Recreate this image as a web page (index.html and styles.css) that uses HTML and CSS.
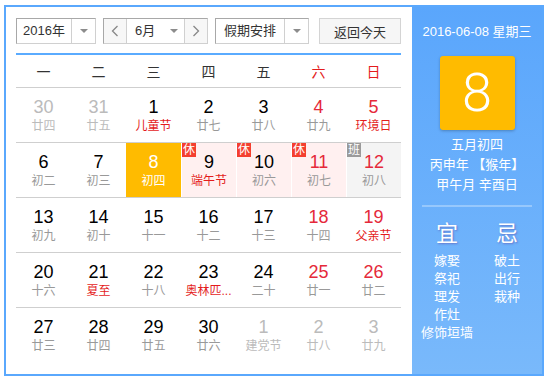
FILE: index.html
```html
<!DOCTYPE html>
<html>
<head>
    <title>万年历</title>
    <link rel="stylesheet" href="styles.css">
</head>
<body>
    <div class="calendar">
        <div class="main">
            <div class="toolbar">
                <div class="select year-select">
                    <span class="select-text">2016年</span>
                    <span class="select-arrow"><i class="tri"></i></span>
                </div>
                <div class="month-group">
                    <span class="nav-btn">
                        <svg width="8" height="12" viewBox="0 0 8 12"><polyline points="6.5,1 1.5,6 6.5,11" fill="none" stroke="#888" stroke-width="1.3"/></svg>
                    </span>
                    <span class="month-text">6月</span>
                    <span class="month-arrow"><i class="tri"></i></span>
                    <span class="nav-btn next">
                        <svg width="8" height="12" viewBox="0 0 8 12"><polyline points="1.5,1 6.5,6 1.5,11" fill="none" stroke="#888" stroke-width="1.3"/></svg>
                    </span>
                </div>
                <div class="select holiday-select">
                    <span class="select-text">假期安排</span>
                    <span class="select-arrow"><i class="tri"></i></span>
                </div>
                <div class="today-btn">返回今天</div>
            </div>

            <div class="week-head">
                <span>一</span><span>二</span><span>三</span><span>四</span><span>五</span>
                <span class="red">六</span><span class="red">日</span>
            </div>

            <div class="row">
                <div class="cell other"><b>30</b><em>廿四</em></div>
                <div class="cell other"><b>31</b><em>廿五</em></div>
                <div class="cell"><b>1</b><em class="fest">儿童节</em></div>
                <div class="cell"><b>2</b><em>廿七</em></div>
                <div class="cell"><b>3</b><em>廿八</em></div>
                <div class="cell weekend"><b>4</b><em>廿九</em></div>
                <div class="cell weekend"><b>5</b><em class="fest">环境日</em></div>
            </div>
            <div class="row">
                <div class="cell"><b>6</b><em>初二</em></div>
                <div class="cell"><b>7</b><em>初三</em></div>
                <div class="cell today"><b>8</b><em>初四</em></div>
                <div class="cell rest"><i class="badge">休</i><b>9</b><em class="fest">端午节</em></div>
                <div class="cell rest"><i class="badge">休</i><b>10</b><em>初六</em></div>
                <div class="cell rest weekend"><i class="badge">休</i><b>11</b><em>初七</em></div>
                <div class="cell work weekend"><i class="badge gray">班</i><b>12</b><em>初八</em></div>
            </div>
            <div class="row">
                <div class="cell"><b>13</b><em>初九</em></div>
                <div class="cell"><b>14</b><em>初十</em></div>
                <div class="cell"><b>15</b><em>十一</em></div>
                <div class="cell"><b>16</b><em>十二</em></div>
                <div class="cell"><b>17</b><em>十三</em></div>
                <div class="cell weekend"><b>18</b><em>十四</em></div>
                <div class="cell weekend"><b>19</b><em class="fest">父亲节</em></div>
            </div>
            <div class="row">
                <div class="cell"><b>20</b><em>十六</em></div>
                <div class="cell"><b>21</b><em class="fest">夏至</em></div>
                <div class="cell"><b>22</b><em>十八</em></div>
                <div class="cell"><b>23</b><em class="fest">奥林匹...</em></div>
                <div class="cell"><b>24</b><em>二十</em></div>
                <div class="cell weekend"><b>25</b><em>廿一</em></div>
                <div class="cell weekend"><b>26</b><em>廿二</em></div>
            </div>
            <div class="row last">
                <div class="cell"><b>27</b><em>廿三</em></div>
                <div class="cell"><b>28</b><em>廿四</em></div>
                <div class="cell"><b>29</b><em>廿五</em></div>
                <div class="cell"><b>30</b><em>廿六</em></div>
                <div class="cell other"><b>1</b><em>建党节</em></div>
                <div class="cell other"><b>2</b><em>廿八</em></div>
                <div class="cell other"><b>3</b><em>廿九</em></div>
            </div>
        </div>

        <div class="side">
            <div class="side-date">2016-06-08 星期三</div>
            <div class="big-day">8</div>
            <div class="lunar">
                <div>五月初四</div>
                <div>丙申年 【猴年】</div>
                <div>甲午月 辛酉日</div>
            </div>
            <div class="side-line"></div>
            <div class="yiji">
                <div class="yiji-col">
                    <div class="yiji-title">宜</div>
                    <div>嫁娶</div>
                    <div>祭祀</div>
                    <div>理发</div>
                    <div>作灶</div>
                    <div>修饰垣墙</div>
                </div>
                <div class="yiji-col">
                    <div class="yiji-title">忌</div>
                    <div>破土</div>
                    <div>出行</div>
                    <div>栽种</div>
                </div>
            </div>
        </div>
    </div>
</body>
</html>
```

FILE: styles.css
```css
body {
    margin: 0;
    font-family: "Liberation Sans", "Noto Sans CJK SC", sans-serif;
    background: #fff;
}

.calendar {
    margin: 5px 0 0 4px;
    width: 536px;
    height: 367px;
    border: 2px solid #5aa8fd;
    display: flex;
}

.main {
    width: 385px;
    padding: 11px 11px 0 10px;
}

/* toolbar */
.toolbar {
    display: flex;
    height: 26px;
    font-size: 13px;
    color: #333;
}

.select, .month-group, .today-btn {
    box-sizing: border-box;
    height: 26px;
    border: 1px solid #d0d0d0;
    border-left-color: #a8a8a8;
    border-top-color: #a8a8a8;
    display: flex;
    align-items: center;
    background: #fff;
}

.year-select {
    width: 80px;
}

.holiday-select {
    width: 94px;
    margin-left: 7px;
}

.select-text {
    flex: 1;
    text-align: center;
    line-height: 24px;
}

.select-arrow {
    width: 23px;
    height: 24px;
    border-left: 1px solid #d0d0d0;
    display: flex;
    align-items: center;
    justify-content: center;
}

.tri {
    width: 0;
    height: 0;
    border-left: 4px solid transparent;
    border-right: 4px solid transparent;
    border-top: 4px solid #8c8c8c;
}

.month-group {
    width: 105px;
    margin-left: 7px;
}

.nav-btn {
    width: 22px;
    height: 24px;
    background: #f7f7f7;
    border-right: 1px solid #d0d0d0;
    display: flex;
    align-items: center;
    justify-content: center;
}

.nav-btn.next {
    border-right: none;
    border-left: 1px solid #d0d0d0;
}

.month-text {
    flex: 1;
    padding-left: 8px;
    line-height: 24px;
}

.month-arrow {
    width: 20px;
    display: flex;
    justify-content: center;
}

.today-btn {
    width: 82px;
    margin-left: 10px;
    justify-content: center;
    background: #f6f6f6;
    border-color: #d4d4d4;
}

/* weekday header */
.week-head {
    margin-top: 9px;
    border-top: 2px solid #5aabff;
    border-bottom: 1px solid #cfcfcf;
    height: 32px;
    display: grid;
    grid-template-columns: repeat(7, 55px);
    align-items: center;
    text-align: center;
    font-size: 14px;
    color: #333;
}

.week-head .red {
    color: #e41c1c;
}

/* day grid */
.row {
    display: grid;
    grid-template-columns: repeat(7, 55px);
    height: 54px;
    border-bottom: 1px solid #cfcfcf;
}

.row.last {
    border-bottom: none;
}

.cell {
    position: relative;
    text-align: center;
    padding-top: 9px;
    box-sizing: border-box;
}

.cell b {
    display: block;
    font-weight: normal;
    font-size: 18px;
    line-height: 20px;
    color: #000;
}

.cell em {
    display: block;
    font-style: normal;
    font-size: 12px;
    line-height: 18px;
    color: #999;
}

.cell em.fest {
    color: #e41c1c;
}

.cell.weekend b {
    color: #e5293a;
}

.cell.other b, .cell.other em {
    color: #bbb;
}

.cell.today {
    background: #ffbb00;
}

.cell.today b, .cell.today em {
    color: #fff;
}

.cell.rest {
    background: #fff0f0;
    border-left: 1px solid #fff;
}

.cell.work {
    background: #f4f4f4;
    border-left: 1px solid #fff;
}

.badge {
    position: absolute;
    top: 0;
    left: 0;
    width: 14px;
    height: 14px;
    background: #f43f2f;
    color: #fff;
    font-style: normal;
    font-size: 12px;
    line-height: 14px;
    text-align: center;
}

.badge.gray {
    background: #9a9a9a;
}

/* right panel */
.side {
    width: 130px;
    background: linear-gradient(#5aa6fc, #79b9fb);
    color: #fff;
    text-align: center;
    display: flex;
    flex-direction: column;
    align-items: center;
}

.side-date {
    margin-top: 16px;
    font-size: 13px;
    line-height: 18px;
}

.big-day {
    margin-top: 15px;
    width: 75px;
    height: 74px;
    background: #ffbb00;
    border-radius: 3px;
    box-shadow: 0 1px 3px rgba(0, 0, 0, 0.25);
    font-family: Roboto, "Liberation Sans", sans-serif;
    font-weight: 300;
    font-size: 54px;
    line-height: 74px;
}

.lunar {
    margin-top: 5px;
    font-size: 13px;
    line-height: 20px;
}

.side-line {
    margin-top: 10px;
    width: 110px;
    height: 2px;
    background: rgba(255, 255, 255, 0.3);
}

.yiji {
    margin-top: 13px;
    display: flex;
    gap: 5px;
    font-size: 13px;
    line-height: 18px;
}

.yiji-col {
    width: 55px;
}

.yiji-title {
    font-size: 22px;
    line-height: 28px;
    margin-bottom: 4px;
    text-shadow: 1px 1px 2px rgba(90, 60, 160, 0.5);
}
```
